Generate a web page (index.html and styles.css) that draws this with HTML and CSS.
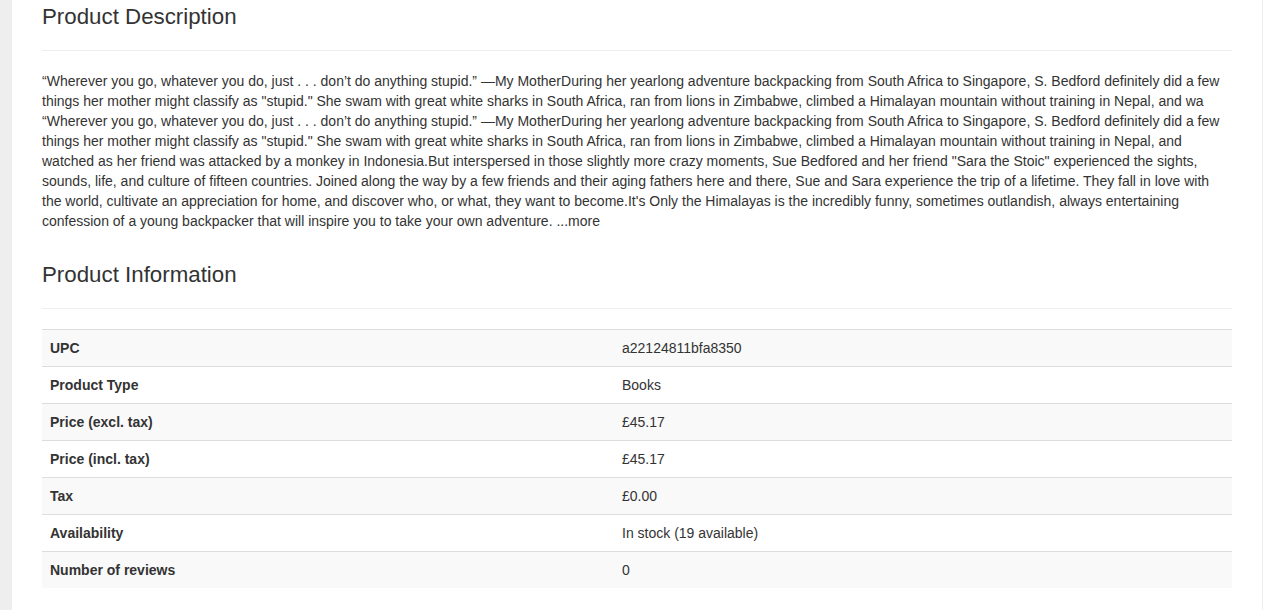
FILE: index.html
```html
<!DOCTYPE html>
<html lang="en">
<head>
<meta charset="utf-8">
<title>It's Only the Himalayas</title>
<link rel="stylesheet" href="styles.css">
</head>
<body>
<div class="page">
  <article class="product-page">
    <div class="sub-header">
      <h2>Product Description</h2>
    </div>
    <p class="description">“Wherever you go, whatever you do, just . . . don’t do anything stupid.” —My MotherDuring her yearlong adventure backpacking from South Africa to Singapore, S. Bedford definitely did a few things her mother might classify as "stupid." She swam with great white sharks in South Africa, ran from lions in Zimbabwe, climbed a Himalayan mountain without training in Nepal, and wa<br>“Wherever you go, whatever you do, just . . . don’t do anything stupid.” —My MotherDuring her yearlong adventure backpacking from South Africa to Singapore, S. Bedford definitely did a few things her mother might classify as "stupid." She swam with great white sharks in South Africa, ran from lions in Zimbabwe, climbed a Himalayan mountain without training in Nepal, and watched as her friend was attacked by a monkey in Indonesia.But interspersed in those slightly more crazy moments, Sue Bedfored and her friend "Sara the Stoic" experienced the sights, sounds, life, and culture of fifteen countries. Joined along the way by a few friends and their aging fathers here and there, Sue and Sara experience the trip of a lifetime. They fall in love with the world, cultivate an appreciation for home, and discover who, or what, they want to become.It's Only the Himalayas is the incredibly funny, sometimes outlandish, always entertaining confession of a young backpacker that will inspire you to take your own adventure. ...more</p>

    <div class="sub-header">
      <h2>Product Information</h2>
    </div>
    <table class="info-table">
      <tr><th>UPC</th><td>a22124811bfa8350</td></tr>
      <tr><th>Product Type</th><td>Books</td></tr>
      <tr><th>Price (excl. tax)</th><td>£45.17</td></tr>
      <tr><th>Price (incl. tax)</th><td>£45.17</td></tr>
      <tr><th>Tax</th><td>£0.00</td></tr>
      <tr><th>Availability</th><td>In stock (19 available)</td></tr>
      <tr><th>Number of reviews</th><td>0</td></tr>
    </table>
  </article>
</div>
</body>
</html>
```

FILE: styles.css
```css
html, body {
  margin: 0;
  padding: 0;
}

body {
  background: #eeeeee;
  font-family: "Liberation Sans", Arial, Helvetica, sans-serif;
  font-size: 14px;
  line-height: 20px;
  color: #333333;
}

.page {
  margin-left: 12px;
  width: 1250px;
  min-height: 610px;
  background: #ffffff;
  box-sizing: border-box;
  padding: 5px 30px 0 30px;
}

.sub-header {
  border-bottom: 1px solid #eeeeee;
  padding-bottom: 21px;
  margin-bottom: 20px;
}

.sub-header h2 {
  margin: 0;
  font-size: 22.3px;
  line-height: 24px;
  font-weight: normal;
  color: #333333;
}

.description {
  margin: 0 0 32px 0;
}

.info-table {
  width: 100%;
  border-collapse: collapse;
  border-spacing: 0;
  margin: 1px 0 20px 0;
}

.info-table th,
.info-table td {
  padding: 8px;
  text-align: left;
  vertical-align: top;
  border-top: 1px solid #dddddd;
  line-height: 20px;
}

.info-table th {
  width: 556px;
  font-weight: bold;
}

.info-table tr:nth-child(odd) {
  background: #f9f9f9;
}
```
